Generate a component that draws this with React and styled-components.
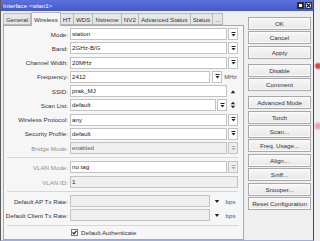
import styled, { createGlobalStyle } from "styled-components";

const GlobalStyle = createGlobalStyle`
  html, body {
    margin: 0;
    padding: 0;
  }
  body {
    width: 320px;
    height: 241px;
    overflow: hidden;
    background:
      radial-gradient(circle at 318px 66px, #d84a4a 0, #d84a4a 2px, transparent 4px),
      radial-gradient(circle at 318px 126px, #e8a6b8 0, #e8a6b8 2px, transparent 5px),
      #eef0f4;
    font-family: "Liberation Sans", Arial, sans-serif;
  }
`;

const Window = styled.div`
  width: 314px;
  height: 241px;
  box-sizing: border-box;
  border-left: 1px solid #5c5c5c;
  border-right: 1px solid #4a4a4a;
  border-bottom: 1px solid #9fb0e0;
  background: #efefef;
  display: flex;
  flex-direction: column;
`;

const TitleBar = styled.div`
  height: 11px;
  flex: none;
  background: linear-gradient(#5d70dd, #4458ca);
  color: #fff;
  font-size: 6.2px;
  display: flex;
  align-items: center;
  justify-content: space-between;
  padding: 0 1px 0 2px;
`;

const WinButtons = styled.div`
  display: flex;
  gap: 1px;
`;

const WinButton = styled.div`
  width: 7px;
  height: 7px;
  box-sizing: border-box;
  background: #fff;
  border: 1px solid #333;
  display: flex;
  align-items: center;
  justify-content: center;
`;

const Body = styled.div`
  flex: 1;
  display: flex;
  gap: 4px;
  padding: 0 2px 0 2px;
  min-height: 0;
`;

const Left = styled.div`
  width: 241px;
  display: flex;
  flex-direction: column;
`;

const TabBar = styled.div`
  height: 14px;
  flex: none;
  display: flex;
  align-items: flex-end;
  font-size: 6.2px;
`;

const Tab = styled.div`
  box-sizing: border-box;
  height: ${(p) => (p.$active ? 14 : 12)}px;
  padding: 0 2px;
  display: flex;
  align-items: center;
  border: 1px solid #b8b8b8;
  border-left: ${(p) => (p.$first || p.$active ? "1px solid #b8b8b8" : "none")};
  border-bottom: ${(p) => (p.$active ? "none" : "1px solid #b8b8b8")};
  background: ${(p) => (p.$active ? "#f6f6f6" : "#e6e6e6")};
  color: #333;
  white-space: nowrap;
  position: relative;
  top: ${(p) => (p.$active ? 1 : 0)}px;
`;

const Panel = styled.div`
  flex: 1;
  box-sizing: border-box;
  border: 1px solid #a8a8a8;
  background: #f6f6f6;
  padding: 2px 5px 0 0;
  display: flex;
  flex-direction: column;
`;

const Section = styled.div`
  display: flex;
  flex-direction: column;
  gap: ${(p) => p.$gap}px;
`;

const Separator = styled.div`
  height: 1px;
  background: #d6d6d6;
  margin: ${(p) => p.$top}px 0 ${(p) => p.$bottom}px 3px;
`;

const Row = styled.div`
  display: grid;
  grid-template-columns: 64px 1fr;
  column-gap: 2px;
  height: 12px;
  align-items: center;
  font-size: 6.2px;
`;

const Label = styled.div`
  text-align: right;
  white-space: nowrap;
  color: ${(p) => (p.$disabled ? "#8e8e8e" : "#333")};
`;

const Controls = styled.div`
  display: flex;
  align-items: center;
  gap: 1px;
  height: 12px;
`;

const Input = styled.div`
  flex: 1;
  height: 12px;
  box-sizing: border-box;
  border: 1px solid #c2c2c2;
  background: ${(p) => (p.$disabled ? "#efefef" : "#fff")};
  color: ${(p) => (p.$muted ? "#5a5a5a" : "#222")};
  padding: 0 1px;
  line-height: 10px;
  white-space: nowrap;
  overflow: hidden;
`;

const ComboBox = styled.div`
  width: 10px;
  height: 12px;
  box-sizing: border-box;
  border: 1px solid #c2c2c2;
  background: ${(p) => (p.$disabled ? "#efefef" : "#fff")};
  display: flex;
  align-items: center;
  justify-content: center;
  margin-left: ${(p) => p.$ml || 0}px;
`;

const Glyph = styled.div`
  width: 10px;
  height: 12px;
  display: flex;
  align-items: center;
  justify-content: center;
  margin-left: ${(p) => p.$ml || 0}px;
`;

const Unit = styled.div`
  width: 15px;
  text-align: center;
  color: #555;
`;

const CheckRow = styled.div`
  display: flex;
  align-items: center;
  gap: 3px;
  font-size: 6.2px;
  color: #333;
  padding-left: 67px;
  height: 9px;
`;

const CheckBox = styled.div`
  width: 7px;
  height: 7px;
  box-sizing: border-box;
  border: 1px solid #7a7a7a;
  background: #fff;
  display: flex;
  align-items: center;
  justify-content: center;
`;

const Right = styled.div`
  width: 63px;
  padding-top: 6px;
  display: flex;
  flex-direction: column;
  gap: 5px;
`;

const ButtonGroup = styled.div`
  display: flex;
  flex-direction: column;
  gap: 1.4px;
`;

const Button = styled.div`
  height: 13px;
  box-sizing: border-box;
  border: 1px solid #a8a8a8;
  background: linear-gradient(#f7f7f7, #e8e8e8);
  box-shadow: inset 0 0 0 1px #fbfbfb;
  font-size: 6.2px;
  color: #333;
  display: flex;
  align-items: center;
  justify-content: center;
  white-space: nowrap;
`;

const DownBar = ({ color = "#222" }) => (
  <svg width="5" height="5" viewBox="0 0 5 5">
    <rect x="0.5" y="0" width="4" height="1" fill={color} />
    <polygon points="0.5,2 4.5,2 2.5,4.6" fill={color} />
  </svg>
);

const UpTri = () => (
  <svg width="6" height="5" viewBox="0 0 6 5">
    <polygon points="0.8,4.2 5.2,4.2 3,1.2" fill="#222" />
  </svg>
);

const DownTri = () => (
  <svg width="6" height="5" viewBox="0 0 6 5">
    <polygon points="0.8,1 5.2,1 3,4" fill="#222" />
  </svg>
);

const UpDown = () => (
  <svg width="6" height="8" viewBox="0 0 6 8">
    <polygon points="0.8,3.2 5.2,3.2 3,0.8" fill="#222" />
    <polygon points="0.8,4.8 5.2,4.8 3,7.2" fill="#222" />
  </svg>
);

const tabs = ["General", "Wireless", "HT", "WDS", "Nstreme", "NV2", "Advanced Status", "Status", "..."];

const ComboRow = ({ label, value, disabled, comboDisabled, muted, inputDisabled }) => (
  <Row>
    <Label $disabled={disabled}>{label}</Label>
    <Controls>
      <Input $disabled={inputDisabled} $muted={muted}>{value}</Input>
      <ComboBox $disabled={comboDisabled}>
        <DownBar color={comboDisabled ? "#aaa" : "#222"} />
      </ComboBox>
    </Controls>
  </Row>
);

const RateRow = ({ label }) => (
  <Row>
    <Label>{label}</Label>
    <Controls>
      <Input $disabled />
      <Glyph $ml={1}>
        <DownTri />
      </Glyph>
      <Unit>bps</Unit>
    </Controls>
  </Row>
);

export default function App() {
  return (
    <>
      <GlobalStyle />
      <Window>
        <TitleBar>
          <span>Interface &lt;wlan1&gt;</span>
          <WinButtons>
            <WinButton>
              <svg width="5" height="5" viewBox="0 0 5 5">
                <rect x="0.5" y="0.5" width="4" height="4" fill="none" stroke="#222" strokeWidth="1" />
              </svg>
            </WinButton>
            <WinButton>
              <svg width="5" height="5" viewBox="0 0 5 5">
                <path d="M0.5 0.5 L4.5 4.5 M4.5 0.5 L0.5 4.5" stroke="#111" strokeWidth="1.2" />
              </svg>
            </WinButton>
          </WinButtons>
        </TitleBar>
        <Body>
          <Left>
            <TabBar>
              {tabs.map((t, i) => (
                <Tab key={t} $first={i === 0} $active={t === "Wireless"}>
                  {t}
                </Tab>
              ))}
            </TabBar>
            <Panel>
              <Section $gap={2.25}>
                <ComboRow label="Mode:" value="station" />
                <ComboRow label="Band:" value="2GHz-B/G" />
                <ComboRow label="Channel Width:" value="20MHz" />
                <Row>
                  <Label>Frequency:</Label>
                  <Controls>
                    <Input>2412</Input>
                    <ComboBox $ml={1}>
                      <DownBar />
                    </ComboBox>
                    <Unit>MHz</Unit>
                  </Controls>
                </Row>
                <Row>
                  <Label>SSID:</Label>
                  <Controls>
                    <Input>prak_MJ</Input>
                    <Glyph>
                      <UpTri />
                    </Glyph>
                  </Controls>
                </Row>
                <Row>
                  <Label>Scan List:</Label>
                  <Controls>
                    <Input>default</Input>
                    <ComboBox>
                      <DownBar />
                    </ComboBox>
                    <Glyph>
                      <UpDown />
                    </Glyph>
                  </Controls>
                </Row>
                <ComboRow label="Wireless Protocol:" value="any" />
                <ComboRow label="Security Profile:" value="default" />
                <ComboRow label="Bridge Mode:" value="enabled" disabled inputDisabled muted comboDisabled />
              </Section>
              <Separator $top={3} $bottom={3} />
              <Section $gap={3}>
                <ComboRow label="VLAN Mode:" value="no tag" disabled comboDisabled />
                <Row>
                  <Label $disabled>VLAN ID:</Label>
                  <Controls>
                    <Input $disabled>1</Input>
                  </Controls>
                </Row>
              </Section>
              <Separator $top={3} $bottom={3} />
              <Section $gap={2}>
                <RateRow label="Default AP Tx Rate:" />
                <RateRow label="Default Client Tx Rate:" />
              </Section>
              <Separator $top={4} $bottom={2} />
              <CheckRow>
                <CheckBox>
                  <svg width="5" height="5" viewBox="0 0 5 5">
                    <path d="M0.6 2.4 L2 3.9 L4.4 0.9" fill="none" stroke="#111" strokeWidth="1.1" />
                  </svg>
                </CheckBox>
                <span>Default Authenticate</span>
              </CheckRow>
            </Panel>
          </Left>
          <Right>
            <ButtonGroup>
              <Button>OK</Button>
              <Button>Cancel</Button>
              <Button>Apply</Button>
            </ButtonGroup>
            <ButtonGroup>
              <Button>Disable</Button>
              <Button>Comment</Button>
            </ButtonGroup>
            <ButtonGroup>
              <Button>Advanced Mode</Button>
              <Button>Torch</Button>
              <Button>Scan...</Button>
              <Button>Freq. Usage...</Button>
              <Button>Align...</Button>
              <Button>Sniff...</Button>
              <Button>Snooper...</Button>
              <Button>Reset Configuration</Button>
            </ButtonGroup>
          </Right>
        </Body>
      </Window>
    </>
  );
}
